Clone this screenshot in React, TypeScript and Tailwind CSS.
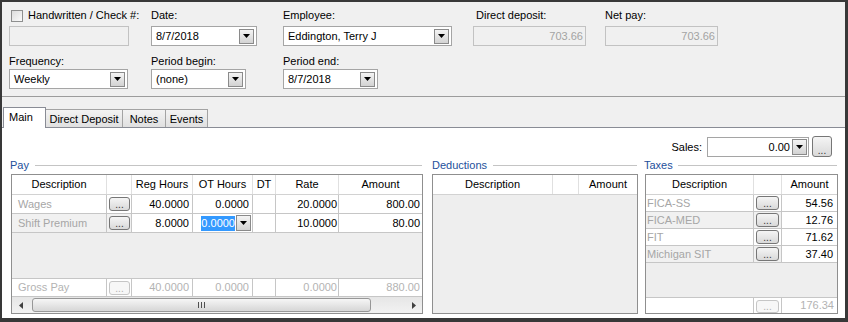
import React from "react";

function Arrow() {
  return (
    <svg width="7" height="4" viewBox="0 0 7 4">
      <polygon points="0,0 7,0 3.5,4" fill="#000" />
    </svg>
  );
}

function DropBtn({ h = "h-[15px]" }: { h?: string }) {
  return (
    <div
      className={`w-[15px] ${h} shrink-0 border border-[#8a8a8a] bg-gradient-to-b from-[#f4f4f4] to-[#d3d3d3] flex items-center justify-center`}
    >
      <Arrow />
    </div>
  );
}

function Combo({ w, text, right }: { w: string; text: string; right?: boolean }) {
  return (
    <div className={`${w} h-[20px] border border-[#a5a5a5] bg-white flex items-center pl-[4px] pr-[2px]`}>
      <span className={`flex-1 whitespace-nowrap ${right ? "text-right pr-[2px]" : ""}`}>{text}</span>
      <DropBtn />
    </div>
  );
}

function TextBox({ w, text }: { w: string; text?: string }) {
  return (
    <div
      className={`${w} h-[20px] border border-[#c2c2c2] bg-[#f0f0f0] flex items-center justify-end pr-[2px] text-[#a3a3a3]`}
    >
      {text}
    </div>
  );
}

function Ellipsis({ w, h = "h-[14px]", faded }: { w: string; h?: string; faded?: boolean }) {
  return (
    <div
      className={`${w} ${h} shrink-0 rounded-[3px] border flex items-end justify-center text-[10px] leading-[9px] pb-[1px] ${
        faded
          ? "border-[#c6c6c6] bg-[#f7f7f7] text-[#b0b0b0]"
          : "border-[#767676] bg-gradient-to-b from-[#f5f5f5] to-[#d9d9d9] text-[#333]"
      }`}
    >
      ...
    </div>
  );
}

function GroupLabel({ text, lineMl }: { text: string; lineMl: string }) {
  return (
    <div className="h-[16px] flex items-center">
      <span className="text-[#23509b] leading-[16px]">{text}</span>
      <div className={`flex-1 h-px bg-[#c4c4c4] ${lineMl} mr-[1px]`} />
    </div>
  );
}

const HCELL = "h-full border-r border-[#e0e0e0] flex items-center justify-center";
const CELL = "h-full border-r border-[#c6c6c6] flex items-center";

export default function App() {
  return (
    <div className="w-[848px] h-[322px] border-t-2 border-l-2 border-r-[3px] border-b-4 border-[#383838] bg-[#f0f0f0] flex flex-col text-[11px] text-black font-['Liberation_Sans',Arial,sans-serif] overflow-hidden">
      {/* Top form */}
      <div className="h-[95px] shrink-0 border-b border-[#9c9c9c] pt-[5px] pl-[7px]">
        <div className="flex">
          <div className="w-[142px]">
            <div className="h-[19px] flex items-start">
              <div className="mt-[3px] ml-[2px] w-[12px] h-[12px] border border-[#8e8f8f] bg-gradient-to-br from-[#dcdcdc] to-[#fbfbfb]" />
              <span className="ml-[5px] leading-[16px]">Handwritten / Check #:</span>
            </div>
            <TextBox w="w-[120px]" />
          </div>
          <div className="w-[132px]">
            <div className="h-[19px] leading-[16px]">Date:</div>
            <Combo w="w-[106px]" text="8/7/2018" />
          </div>
          <div className="w-[190px]">
            <div className="h-[19px] leading-[16px]">Employee:</div>
            <Combo w="w-[169px]" text="Eddington, Terry J" />
          </div>
          <div className="w-[132px]">
            <div className="h-[19px] leading-[16px] pl-[3px]">Direct deposit:</div>
            <TextBox w="w-[113px]" text="703.66" />
          </div>
          <div className="w-[113px]">
            <div className="h-[19px] leading-[16px]">Net pay:</div>
            <TextBox w="w-[113px]" text="703.66" />
          </div>
        </div>
        <div className="flex mt-[8px]">
          <div className="w-[142px]">
            <div className="h-[15px] leading-[15px]">Frequency:</div>
            <Combo w="w-[119px]" text="Weekly" />
          </div>
          <div className="w-[132px]">
            <div className="h-[15px] leading-[15px]">Period begin:</div>
            <Combo w="w-[95px]" text="(none)" />
          </div>
          <div className="w-[190px]">
            <div className="h-[15px] leading-[15px]">Period end:</div>
            <Combo w="w-[95px]" text="8/7/2018" />
          </div>
        </div>
      </div>

      {/* Tabs */}
      <div className="h-[30px] shrink-0 flex items-end pl-[1px]">
        <div className="relative top-[1px] z-10 w-[43px] h-[21px] bg-white border border-b-0 border-[#898c95] pl-[5px] pt-[2px] leading-[14px]">
          Main
        </div>
        <div className="w-[77px] h-[18px] border-t border-r border-[#a3a3a3] bg-gradient-to-b from-[#f3f3f3] to-[#e0e0e0] pt-[2px] leading-[14px] text-center">
          Direct Deposit
        </div>
        <div className="w-[43px] h-[18px] border-t border-r border-[#a3a3a3] bg-gradient-to-b from-[#f3f3f3] to-[#e0e0e0] pt-[2px] leading-[14px] text-center">
          Notes
        </div>
        <div className="w-[42px] h-[18px] border-t border-r border-[#a3a3a3] bg-gradient-to-b from-[#f3f3f3] to-[#e0e0e0] pt-[2px] leading-[14px] text-center">
          Events
        </div>
      </div>

      {/* Panel */}
      <div className="flex-1 min-h-0 bg-white border-t border-[#898c95] flex flex-col pt-[9px] pb-[4px]">
        <div className="h-[20px] shrink-0 flex items-end justify-end pr-[13px]">
          <span className="mr-[5px] self-center">Sales:</span>
          <div className="w-[102px] h-[20px] border border-[#a5a5a5] bg-white flex items-center pr-[1px]">
            <span className="flex-1 text-right pr-[2px]">0.00</span>
            <DropBtn h="h-[16px]" />
          </div>
          <div className="ml-[3px]">
            <Ellipsis w="w-[20px]" h="h-[21px]" />
          </div>
        </div>

        <div className="flex flex-1 min-h-0">
          {/* Pay */}
          <div className="ml-[8px] w-[413px] flex flex-col">
            <GroupLabel text="Pay" lineMl="ml-[6px]" />
            <div className="ml-[1px] mt-[1px] w-[412px] h-[140px] border border-[#8f8f8f] bg-[#eeeeee] flex flex-col">
              <div className="h-[20px] shrink-0 bg-white border-b border-[#d2d2d2] flex">
                <div className={`${HCELL} w-[95px]`}>Description</div>
                <div className={`${HCELL} w-[25px]`} />
                <div className={`${HCELL} w-[61px]`}>Reg Hours</div>
                <div className={`${HCELL} w-[60px]`}>OT Hours</div>
                <div className={`${HCELL} w-[23px]`}>DT</div>
                <div className={`${HCELL} w-[63px]`}>Rate</div>
                <div className="h-full w-[83px] flex items-center justify-center">Amount</div>
              </div>
              {/* Wages */}
              <div className="h-[19px] shrink-0 bg-white border-b border-[#c6c6c6] flex">
                <div className={`${CELL} w-[95px] pl-[6px] text-[#a6a6a6]`}>Wages</div>
                <div className={`${CELL} w-[25px] pl-[2px]`}>
                  <Ellipsis w="w-[21px]" />
                </div>
                <div className={`${CELL} w-[61px] justify-end pr-[3px]`}>40.0000</div>
                <div className={`${CELL} w-[60px] justify-end pr-[3px]`}>0.0000</div>
                <div className={`${CELL} w-[23px]`} />
                <div className={`${CELL} w-[63px] justify-end pr-[1px]`}>20.0000</div>
                <div className="h-full w-[83px] flex items-center justify-end pr-[2px]">800.00</div>
              </div>
              {/* Shift Premium */}
              <div className="h-[19px] shrink-0 bg-white border-b border-[#c6c6c6] flex">
                <div className={`${CELL} w-[95px] pl-[6px] text-[#a6a6a6] bg-[#f1f1f1] whitespace-nowrap`}>Shift Premium</div>
                <div className={`${CELL} w-[25px] pl-[2px] bg-[#f1f1f1]`}>
                  <Ellipsis w="w-[21px]" />
                </div>
                <div className={`${CELL} w-[61px] justify-end pr-[3px]`}>8.0000</div>
                <div className={`${CELL} w-[60px] justify-end pr-[1px]`}>
                  <span className="bg-[#3399ff] text-white leading-[15px]">0.0000</span>
                  <div className="ml-[1px]">
                    <DropBtn h="h-[16px]" />
                  </div>
                </div>
                <div className={`${CELL} w-[23px]`} />
                <div className={`${CELL} w-[63px] justify-end pr-[1px]`}>10.0000</div>
                <div className="h-full w-[83px] flex items-center justify-end pr-[2px]">80.00</div>
              </div>
              <div className="flex-1" />
              {/* Gross Pay */}
              <div className="h-[19px] shrink-0 bg-white border-t border-b border-[#c6c6c6] flex text-[#b3b3b3]">
                <div className={`${CELL} w-[95px] pl-[6px]`}>Gross Pay</div>
                <div className={`${CELL} w-[25px] pl-[2px]`}>
                  <Ellipsis w="w-[21px]" faded />
                </div>
                <div className={`${CELL} w-[61px] justify-end pr-[3px]`}>40.0000</div>
                <div className={`${CELL} w-[60px] justify-end pr-[3px]`}>0.0000</div>
                <div className={`${CELL} w-[23px]`} />
                <div className={`${CELL} w-[63px] justify-end pr-[1px]`}>0.0000</div>
                <div className="h-full w-[83px] flex items-center justify-end pr-[2px]">880.00</div>
              </div>
              {/* Scrollbar */}
              <div className="h-[16px] shrink-0 flex items-center bg-gradient-to-b from-[#e6e6e6] to-[#f2f2f2]">
                <div className="w-[17px] h-full flex items-center justify-center">
                  <svg width="4" height="7" viewBox="0 0 4 7">
                    <polygon points="4,0 4,7 0,3.5" fill="#404040" />
                  </svg>
                </div>
                <div className="ml-[3px] w-[339px] h-[14px] rounded-[3px] border border-[#979797] bg-gradient-to-b from-[#f6f6f6] to-[#d6d6d6] flex items-center justify-center">
                  <svg width="7" height="6" viewBox="0 0 7 6">
                    <rect x="0" y="0" width="1" height="6" fill="#505050" />
                    <rect x="3" y="0" width="1" height="6" fill="#505050" />
                    <rect x="6" y="0" width="1" height="6" fill="#505050" />
                  </svg>
                </div>
                <div className="flex-1" />
                <div className="w-[17px] h-full flex items-center justify-center">
                  <svg width="4" height="7" viewBox="0 0 4 7">
                    <polygon points="0,0 0,7 4,3.5" fill="#404040" />
                  </svg>
                </div>
              </div>
            </div>
          </div>

          {/* Deductions */}
          <div className="ml-[9px] w-[206px] flex flex-col">
            <GroupLabel text="Deductions" lineMl="ml-[6px]" />
            <div className="mt-[1px] w-[206px] h-[140px] border border-[#8f8f8f] bg-[#eeeeee] flex flex-col">
              <div className="h-[20px] shrink-0 bg-white border-b border-[#d2d2d2] flex">
                <div className={`${HCELL} w-[120px]`}>Description</div>
                <div className={`${HCELL} w-[26px]`} />
                <div className="h-full w-[58px] flex items-center justify-center">Amount</div>
              </div>
            </div>
          </div>

          {/* Taxes */}
          <div className="ml-[6px] w-[194px] flex flex-col">
            <GroupLabel text="Taxes" lineMl="ml-[5px]" />
            <div className="ml-[1px] mt-[1px] w-[193px] h-[140px] border border-[#8f8f8f] bg-[#eeeeee] flex flex-col">
              <div className="h-[20px] shrink-0 bg-white border-b border-[#d2d2d2] flex">
                <div className={`${HCELL} w-[108px]`}>Description</div>
                <div className={`${HCELL} w-[28px]`} />
                <div className="h-full w-[55px] flex items-center justify-center">Amount</div>
              </div>
              {[
                ["FICA-SS", "54.56", false],
                ["FICA-MED", "12.76", true],
                ["FIT", "71.62", false],
                ["Michigan SIT", "37.40", true],
              ].map(([d, a, alt]) => (
                <div key={d as string} className="h-[17px] shrink-0 bg-white border-b border-[#c6c6c6] flex">
                  <div
                    className={`${CELL} w-[108px] pl-[1px] text-[#a6a6a6] whitespace-nowrap ${alt ? "bg-[#f1f1f1]" : ""}`}
                  >
                    {d}
                  </div>
                  <div className={`${CELL} w-[28px] pl-[2px] ${alt ? "bg-[#f1f1f1]" : ""}`}>
                    <Ellipsis w="w-[23px]" />
                  </div>
                  <div className="h-full w-[55px] flex items-center justify-end pr-[4px]">{a}</div>
                </div>
              ))}
              <div className="flex-1" />
              <div className="h-[16px] shrink-0 bg-white border-t border-[#c6c6c6] flex text-[#b3b3b3]">
                <div className={`${CELL} w-[108px]`} />
                <div className={`${CELL} w-[28px] pl-[2px] items-end`}>
                  <Ellipsis w="w-[23px]" h="h-[13px]" faded />
                </div>
                <div className="h-full w-[55px] flex items-center justify-end pr-[3px]">176.34</div>
              </div>
            </div>
          </div>
        </div>
      </div>
    </div>
  );
}
